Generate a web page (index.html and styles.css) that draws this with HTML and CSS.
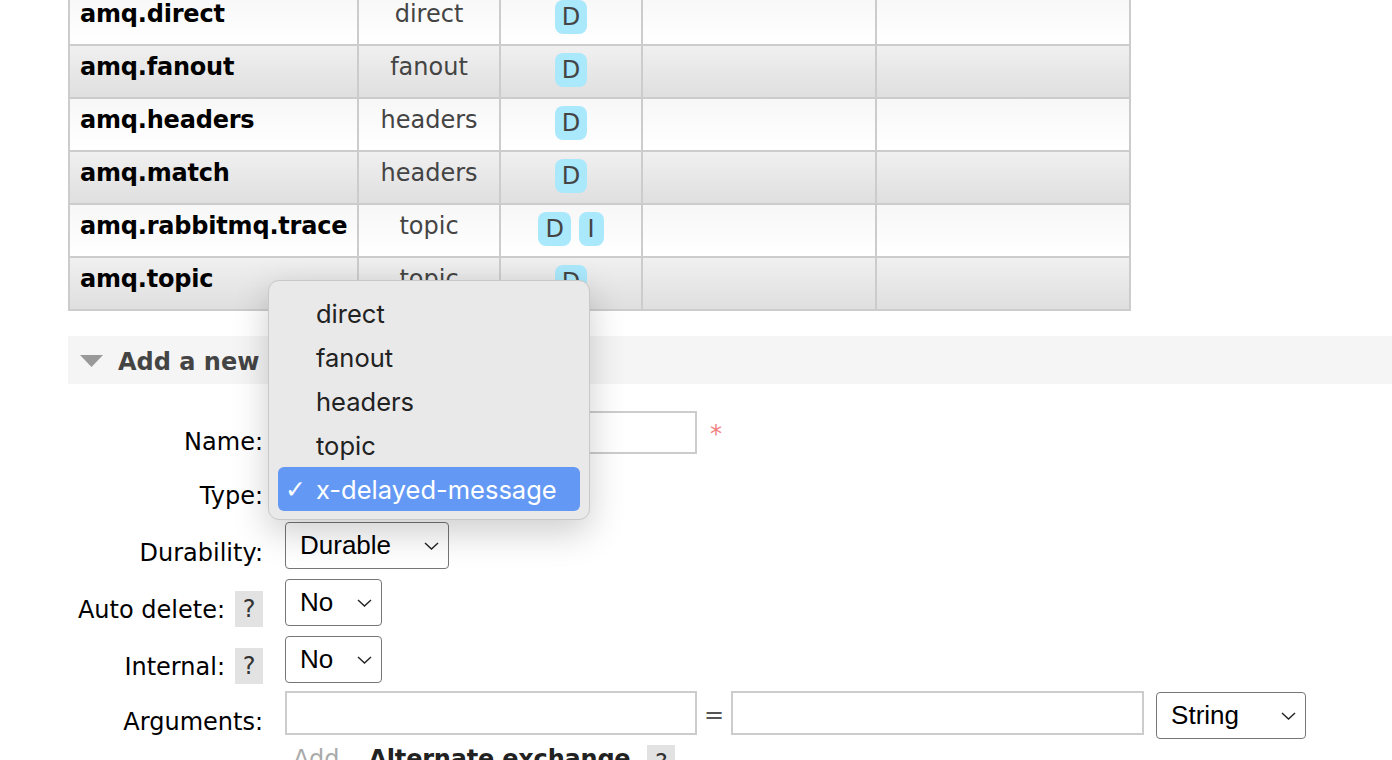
FILE: index.html
```html
<!DOCTYPE html>
<html>
<head>
<meta charset="utf-8">
<link rel="stylesheet" href="styles.css">
</head>
<body>
<div class="page">
  <table class="list">
    <colgroup>
      <col class="c1"><col class="c2"><col class="c3"><col class="c4"><col class="c5">
    </colgroup>
    <tbody>
      <tr class="alt2"><td class="name">amq.direct</td><td class="type">direct</td><td class="feat"><abbr class="badge">D</abbr></td><td></td><td></td></tr>
      <tr class="alt1"><td class="name">amq.fanout</td><td class="type">fanout</td><td class="feat"><abbr class="badge">D</abbr></td><td></td><td></td></tr>
      <tr class="alt2"><td class="name">amq.headers</td><td class="type">headers</td><td class="feat"><abbr class="badge">D</abbr></td><td></td><td></td></tr>
      <tr class="alt1"><td class="name">amq.match</td><td class="type">headers</td><td class="feat"><abbr class="badge">D</abbr></td><td></td><td></td></tr>
      <tr class="alt2"><td class="name">amq.rabbitmq.trace</td><td class="type">topic</td><td class="feat"><abbr class="badge">D</abbr> <abbr class="badge badge-i">I</abbr></td><td></td><td></td></tr>
      <tr class="alt1"><td class="name">amq.topic</td><td class="type">topic</td><td class="feat"><abbr class="badge">D</abbr></td><td></td><td></td></tr>
    </tbody>
  </table>

  <div class="section-head">
    <svg class="tri" viewBox="0 0 23 12" width="23" height="12"><polygon points="0,0 23,0 11.5,12" fill="#999"/></svg>
    <span>Add a new exchange</span>
  </div>

  <div class="form">
    <div class="frow frow-name">
      <div class="flabel">Name:</div>
      <div class="ffield"><div class="inp inp-name"></div><span class="req">*</span></div>
    </div>
    <div class="frow">
      <div class="flabel">Type:</div>
      <div class="ffield"><div class="sel sel-type"><span>x-delayed-message</span><svg class="chev" viewBox="0 0 15 8" width="15" height="8"><polyline points="1,1 7.5,7 14,1" fill="none" stroke="#222" stroke-width="1.4"/></svg></div></div>
    </div>
    <div class="frow">
      <div class="flabel">Durability:</div>
      <div class="ffield"><div class="sel sel-dur"><span>Durable</span><svg class="chev" viewBox="0 0 15 8" width="15" height="8"><polyline points="1,1 7.5,7 14,1" fill="none" stroke="#222" stroke-width="1.4"/></svg></div></div>
    </div>
    <div class="frow">
      <div class="flabel">Auto delete:<span class="help">?</span></div>
      <div class="ffield"><div class="sel sel-no"><span>No</span><svg class="chev" viewBox="0 0 15 8" width="15" height="8"><polyline points="1,1 7.5,7 14,1" fill="none" stroke="#222" stroke-width="1.4"/></svg></div></div>
    </div>
    <div class="frow">
      <div class="flabel">Internal:<span class="help">?</span></div>
      <div class="ffield"><div class="sel sel-no"><span>No</span><svg class="chev" viewBox="0 0 15 8" width="15" height="8"><polyline points="1,1 7.5,7 14,1" fill="none" stroke="#222" stroke-width="1.4"/></svg></div></div>
    </div>
    <div class="frow frow-args">
      <div class="flabel">Arguments:</div>
      <div class="ffield args">
        <div class="inp inp-arg"></div>
        <span class="eq">=</span>
        <div class="inp inp-arg2"></div>
        <div class="sel sel-str"><span>String</span><svg class="chev" viewBox="0 0 15 8" width="15" height="8"><polyline points="1,1 7.5,7 14,1" fill="none" stroke="#222" stroke-width="1.4"/></svg></div>
      </div>
    </div>
    <div class="frow frow-add">
      <div class="flabel"></div>
      <div class="ffield addline"><span class="add">Add</span><span class="alt">Alternate exchange</span><span class="help help-add">?</span></div>
    </div>
  </div>
</div>

<div class="popup">
  <div class="opt"><span class="ck"></span>direct</div>
  <div class="opt"><span class="ck"></span>fanout</div>
  <div class="opt"><span class="ck"></span>headers</div>
  <div class="opt"><span class="ck"></span>topic</div>
  <div class="opt opt-on"><span class="ck">✓</span>x-delayed-message</div>
</div>
</body>
</html>
```
FILE: styles.css
```css
html, body {
  margin: 0;
  padding: 0;
  background: #fff;
  overflow: hidden;
}
body {
  width: 1392px;
  height: 760px;
  position: relative;
  font-family: "DejaVu Sans", Verdana, sans-serif;
  font-size: 24px;
  color: #000;
}
.page {
  padding-left: 68px;
  width: 1400px;
}

/* table */
table.list {
  border-collapse: separate;
  border-spacing: 0;
  table-layout: fixed;
  width: 1063px;
  margin-top: -9px;
  border-left: 2px solid #ccc;
  border-top: 2px solid #ccc;
}
col.c1 { width: 289px; }
col.c2 { width: 142px; }
col.c3 { width: 142px; }
col.c4 { width: 234px; }
col.c5 { width: 254px; }
table.list tr { height: 53px; }
table.list td {
  border-right: 2px solid #ccc;
  border-bottom: 2px solid #ccc;
  padding: 7px 10px 0;
  vertical-align: top;
  line-height: 28px;
  white-space: nowrap;
  overflow: hidden;
}
tr.alt1 td { background: linear-gradient(#f0f0f0, #dfdfdf); }
tr.alt2 td { background: linear-gradient(#f7f7f7, #ffffff); }
td.name { font-weight: bold; color: #000; letter-spacing: -0.2px; }
td.type { text-align: center; color: #444; }
td.feat { text-align: center; padding-left: 0; padding-right: 0; }
abbr.badge {
  display: inline-block;
  background: #aae8fb;
  color: #444;
  border-radius: 8px;
  padding: 3px 7px;
  line-height: 28px;
  text-decoration: none;
  vertical-align: top;
}
abbr.badge-i { padding: 3px 9px; }

/* section header */
.section-head {
  margin-top: 25px;
  height: 48px;
  box-sizing: border-box;
  background: #f5f5f5;
  display: flex;
  align-items: center;
  padding-left: 12px;
  padding-top: 4px;
  font-weight: bold;
  color: #444;
}
.tri { margin-right: 15px; flex: none; margin-top: -3px; }

/* form */
.form {
  margin-top: 24px;
  display: flex;
  flex-direction: column;
  row-gap: 10px;
}
.frow {
  display: grid;
  grid-template-columns: 195px 1fr;
  column-gap: 22px;
  height: 47px;
}
.frow-name { margin-top: 1px; margin-bottom: -1px; }
.flabel {
  text-align: right;
  line-height: 47px;
  padding-top: 8px;
  white-space: nowrap;
  color: #000;
}
.frow-name .flabel { padding-top: 10px; }
.ffield {
  display: flex;
  align-items: flex-start;
}
.help {
  display: inline-block;
  width: 28px;
  height: 36px;
  line-height: 36px;
  text-align: center;
  background: #e2e2e2;
  color: #333;
  margin-left: 10px;
  vertical-align: 1px;
}
.inp {
  box-sizing: border-box;
  height: 43px;
  border: 2px solid #ccc;
  background: #fff;
}
.inp-name { width: 412px; margin-top: 2px; }
.req {
  color: #f08080;
  margin-left: 13px;
  line-height: 47px;
  padding-top: 2px;
}
.sel {
  box-sizing: border-box;
  height: 47px;
  display: flex;
  align-items: center;
  justify-content: space-between;
  border: 1px solid #767676;
  border-radius: 4px;
  background: #fff;
  padding: 0 9px 0 14px;
  font-family: "Liberation Sans", Arial, sans-serif;
  font-size: 26px;
  color: #000;
}
.chev { flex: none; }
.sel-type { width: 300px; }
.sel-dur { width: 164px; }
.sel-no { width: 97px; }
.sel-str { width: 150px; margin-top: 1px; margin-left: 12px; }

.frow-args { margin-top: -2px; }
.inp-arg { width: 412px; height: 44px; }
.inp-arg2 { width: 413px; height: 44px; }
.eq {
  color: #555;
  margin: 0 7px 0 7px;
  line-height: 44px;
  padding-top: 2px;
}

.frow-add { margin-top: -3px; }
.addline { line-height: 28px; }
.add { color: #aaa; margin-left: 8px; }
.alt { font-weight: bold; color: #222; margin-left: 29px; letter-spacing: -0.2px; }
.help-add { margin-left: 17px; }

/* popup menu */
.popup {
  position: absolute;
  left: 268px;
  top: 280px;
  width: 322px;
  height: 240px;
  box-sizing: border-box;
  background: #e9e9e9;
  border: 1px solid #c8c8c8;
  border-radius: 11px;
  box-shadow: 0 12px 36px rgba(0, 0, 0, 0.2);
  padding: 10px 9px 8px;
  font-family: Inter, "Noto Sans", sans-serif;
  font-size: 25.5px;
  color: #222;
}
.opt {
  height: 44px;
  display: flex;
  align-items: center;
  padding-left: 7px;
  border-radius: 6px;
}
.opt-on {
  background: #6399f4;
  color: #fff;
}
.ck {
  width: 31px;
  flex: none;
  font-family: "DejaVu Sans", sans-serif;
  font-size: 25px;
  font-weight: bold;
}
```
